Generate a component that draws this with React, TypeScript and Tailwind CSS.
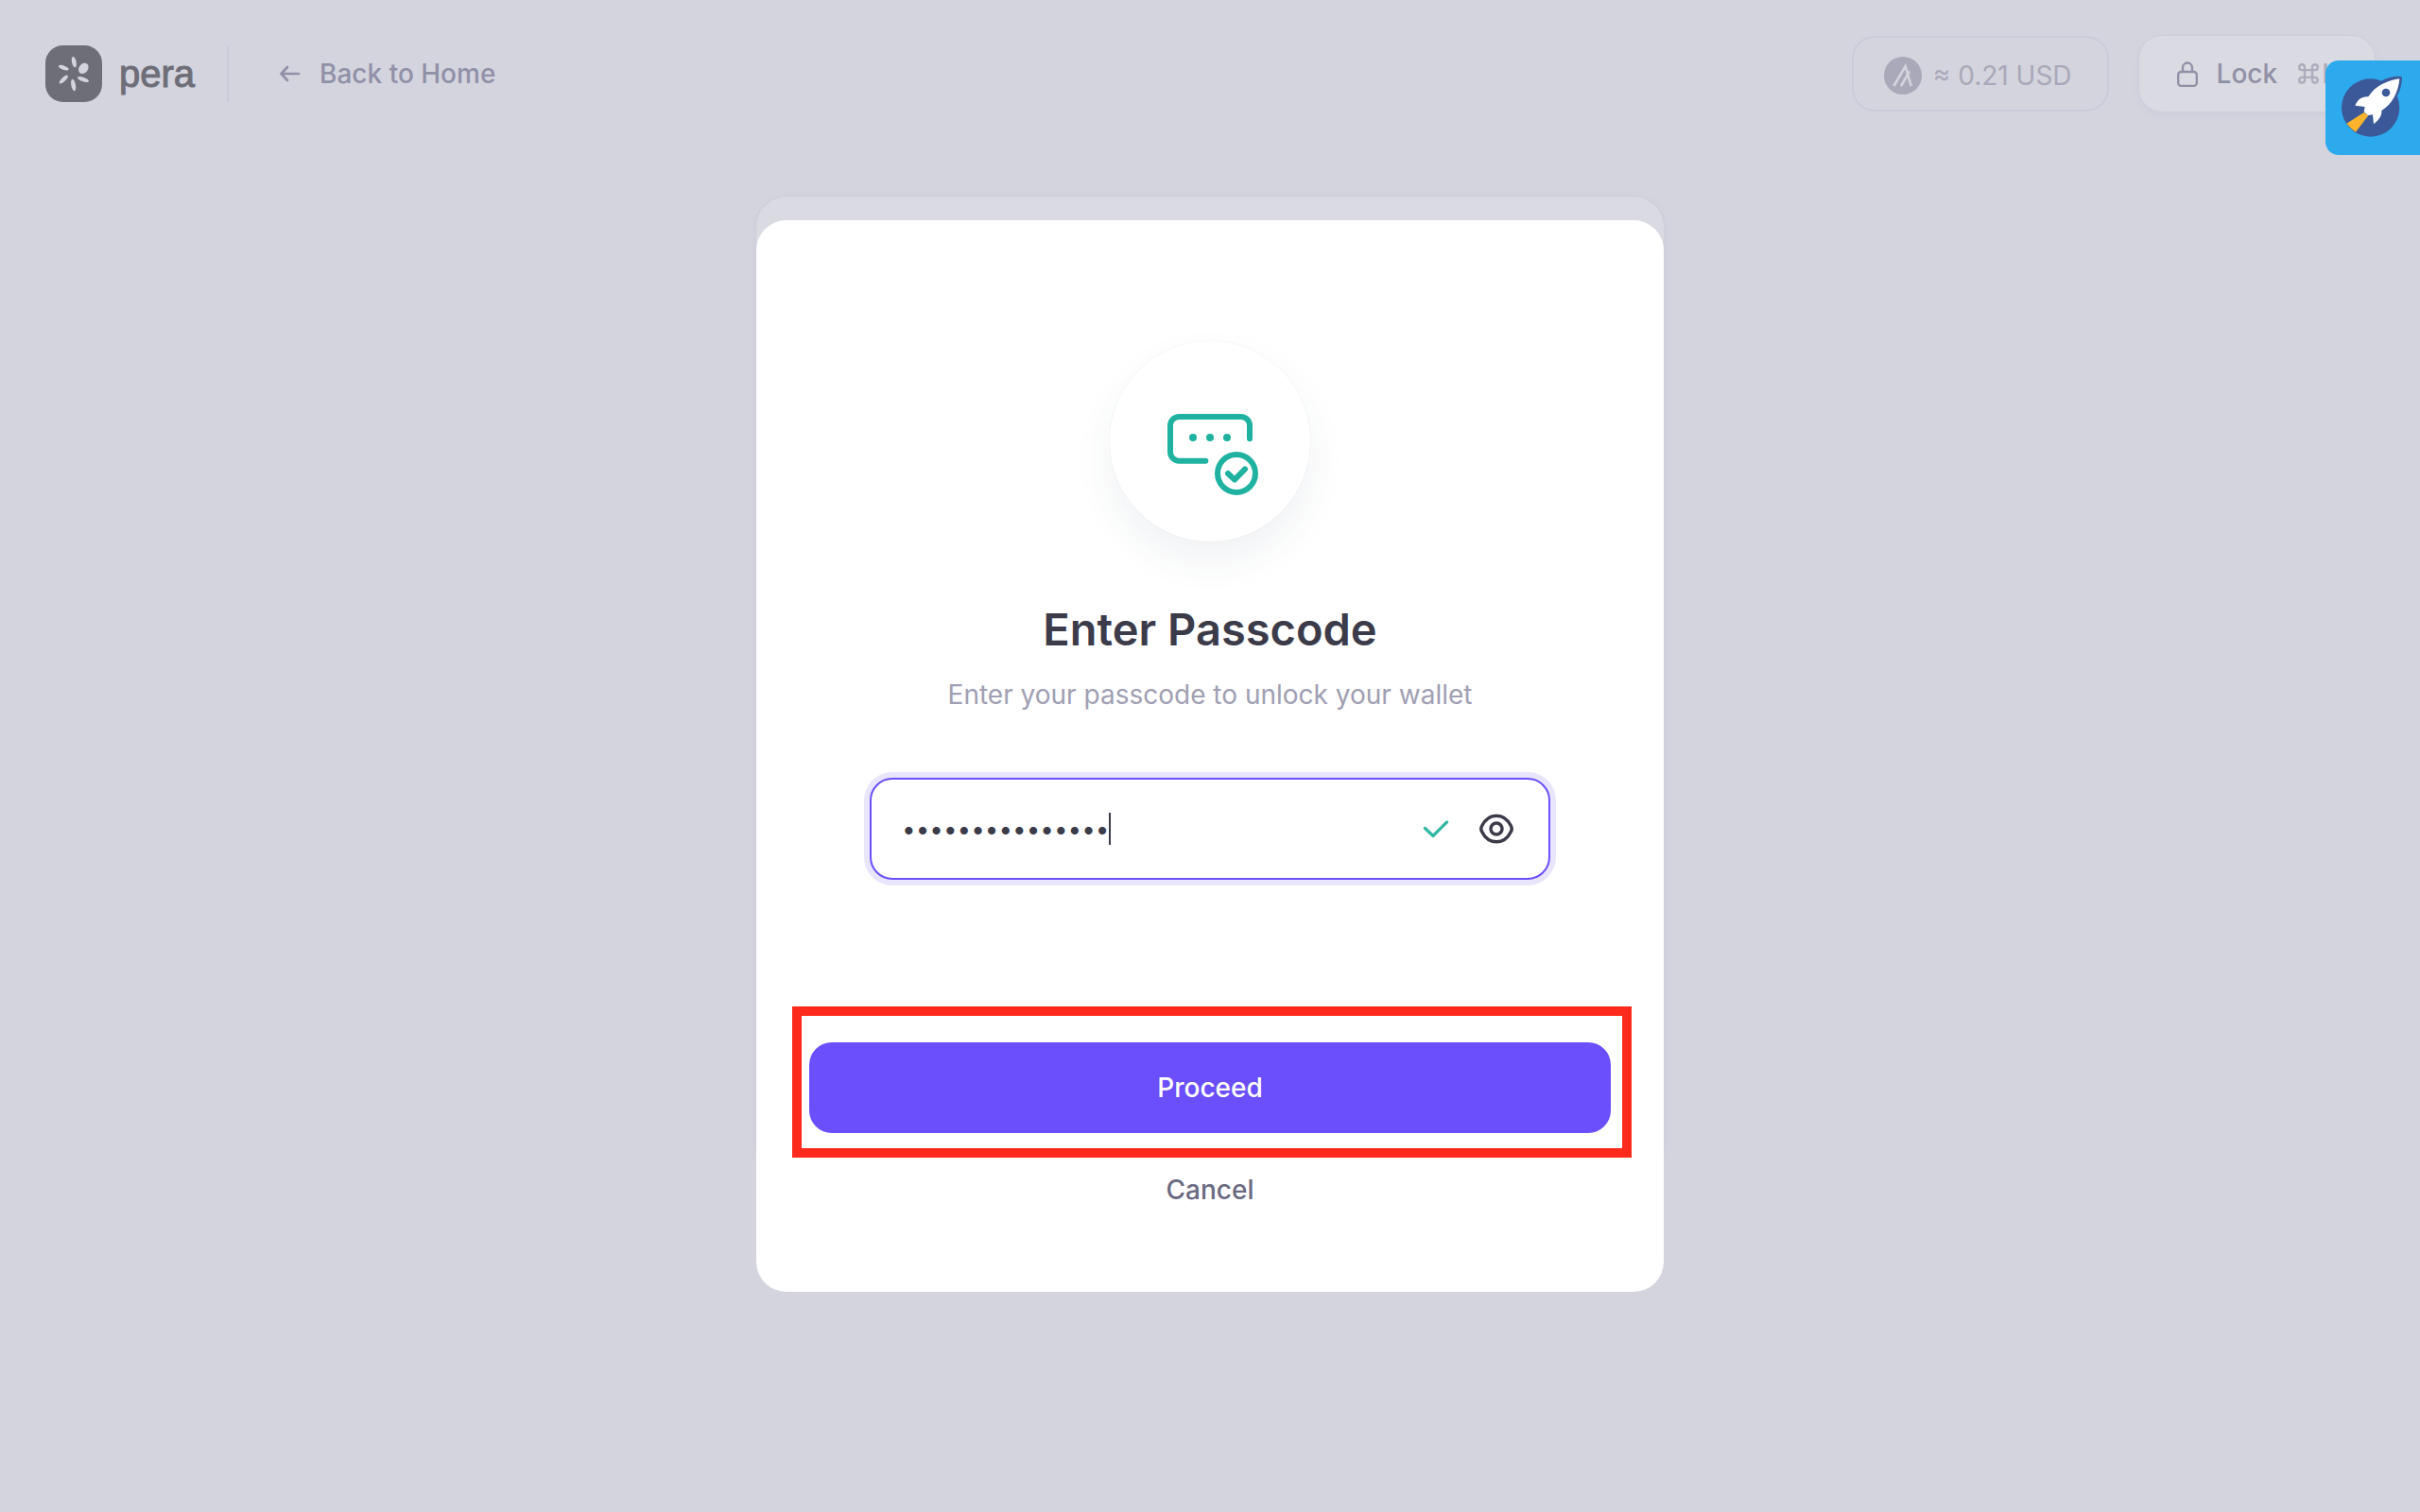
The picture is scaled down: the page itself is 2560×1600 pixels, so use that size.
import { useState } from "react";

function PeraMark() {
  return (
    <svg viewBox="0 0 180 180" className="size-[60px]" aria-hidden="true">
      <rect width="180" height="180" rx="56" fill="#6e6e78" />
      <g fill="#d4d4de">
        <ellipse cx="121" cy="73" rx="14" ry="18.500" transform="rotate(38 121 73)" />
        <ellipse cx="91" cy="53" rx="7" ry="17.500" transform="rotate(-12 91 53)" />
        <ellipse cx="58" cy="71" rx="6.500" ry="17" transform="rotate(-70 58 71)" />
        <ellipse cx="58" cy="108" rx="6.500" ry="18" transform="rotate(46 58 108)" />
        <ellipse cx="89" cy="126" rx="7" ry="19" transform="rotate(-11 89 126)" />
        <ellipse cx="120" cy="108" rx="6.500" ry="19" transform="rotate(-70 120 108)" />
      </g>
    </svg>
  );
}

function BackArrow() {
  return (
    <svg viewBox="0 0 22 18" className="h-[18px] w-[22px]" fill="none" stroke="currentColor" strokeWidth="2.600" strokeLinecap="round" strokeLinejoin="round" aria-hidden="true">
      <path d="M20 9H1.500M8 2L1.500 9L8 16" />
    </svg>
  );
}

function AlgoCoin() {
  return (
    <svg viewBox="0 0 120 120" className="size-10" aria-hidden="true">
      <circle cx="60" cy="60" r="60" fill="#a9a9b9" />
      <g fill="none" stroke="#d4d4de" strokeWidth="8" strokeLinejoin="miter">
        <path d="M31 93L68 30L86 93" />
        <path d="M54 93L81 46" />
      </g>
    </svg>
  );
}

function LockIcon() {
  return (
    <svg viewBox="0 0 22 27" className="h-[27px] w-[22px]" fill="none" stroke="currentColor" strokeWidth="2.300" aria-hidden="true">
      <rect x="1.200" y="11" width="19.600" height="14.800" rx="3" />
      <path d="M6 11V6.500a5 5 0 0 1 10 0V11" />
    </svg>
  );
}

function CommandIcon() {
  return (
    <svg viewBox="0 0 22 22" className="size-[22px]" fill="none" stroke="currentColor" strokeWidth="2.400" aria-hidden="true">
      <path d="M7 4.200a2.900 2.900 0 1 0-2.900 2.900h13.800a2.900 2.900 0 1 0-2.900-2.900v13.600a2.900 2.900 0 1 0 2.900-2.900H4.100a2.900 2.900 0 1 0 2.900 2.900z" />
    </svg>
  );
}

function Rocket() {
  return (
    <svg viewBox="0 0 300 300" className="size-[100px]" aria-hidden="true">
      <circle cx="143" cy="150" r="92" fill="#3b5998" />
      <path d="M176 66C198 53 222 49 240 51Q244 52 243 58C241 80 237 98 226 116L190 120Z" fill="#3b5998" />
      <path d="M122 165L136 175L96 227Q79 216 67 200Z" fill="#fbb42b" />
      <path d="M235 58C198 63 158 80 136 115C113 114 103 125 94 143L125 147L122 163L135 174L150 172L153 202C164 192 180 180 178 159C211 140 232 100 235 58Z" fill="#fff" />
      <circle cx="192" cy="102" r="13" fill="#3b5998" />
    </svg>
  );
}

function PasscodeIcon() {
  return (
    <svg viewBox="0 0 288 258" className="h-[86px] w-24" fill="none" stroke="#1fb2a0" strokeWidth="18" strokeLinecap="round" strokeLinejoin="round" aria-hidden="true">
      <path d="M261 79V37a28 28 0 0 0-28-28H37A28 28 0 0 0 9 37v84a28 28 0 0 0 28 28h84" />
      <g fill="#1fb2a0" stroke="none">
        <circle cx="81" cy="75" r="12" />
        <circle cx="135" cy="75" r="12" />
        <circle cx="189" cy="75" r="12" />
      </g>
      <circle cx="219" cy="189" r="60" />
      <path d="M192 189l21 20 33-34" />
    </svg>
  );
}

function CheckIcon() {
  return (
    <svg viewBox="0 0 28 20" className="h-5 w-7" fill="none" stroke="#34b8a5" strokeWidth="3.300" strokeLinecap="round" strokeLinejoin="round" aria-hidden="true">
      <path d="M2.500 9.500l8.500 8L25.500 3" />
    </svg>
  );
}

function EyeIcon() {
  return (
    <svg viewBox="0 0 36 32" className="h-8 w-9" fill="none" stroke="currentColor" strokeWidth="3.500" strokeLinejoin="round" aria-hidden="true">
      <path d="M2.600 19Q1 16 2.600 13C6 6 11.500 2.200 18 2.200S30 6 33.400 13Q35 16 33.400 19C30 26 24.500 29.800 18 29.800S6 26 2.600 19Z" />
      <circle cx="18" cy="16" r="6" />
    </svg>
  );
}

export default function App() {
  const [passcode, setPasscode] = useState("correcthorse123");
  const [visible, setVisible] = useState(false);

  return (
    <div className="relative min-h-screen bg-[#d4d4de] font-['Inter',sans-serif] text-[28px] leading-10">
      <header className="flex items-center justify-between px-12 pt-[38px]">
        <div className="flex items-center">
          <a href="#home" className="flex items-center gap-[18px]">
            <PeraMark />
            <span className="font-['Liberation_Sans',sans-serif] text-[40px] leading-[60px] text-[#6e6e78] [-webkit-text-stroke:1px_#6e6e78]">pera</span>
          </a>
          <span className="ml-[34px] h-[60px] w-0.5 bg-[#cacad9]" />
          <a href="#home" className="ml-[54px] flex items-center gap-5 font-medium text-[#9090a8]">
            <BackArrow />
            Back to Home
          </a>
        </div>
        <div className="flex items-center gap-8">
          <div className="flex h-20 items-center gap-3 rounded-3xl border-2 border-[#cacad9] pt-1 pr-[37px] pl-8 text-[#a9a9b9]">
            <AlgoCoin />
            ≈ 0.21 USD
          </div>
          <button type="button" className="flex h-20 items-center rounded-3xl bg-[#dadae2] px-10 font-medium text-[#9090a6] shadow-[0_0_0_1px_#cdcddb,0_4px_8px_#cdcdda]">
            <LockIcon />
            <span className="ml-5">Lock</span>
            <span className="ml-[22px] flex items-center gap-[3px] text-[#acacbc]">
              <CommandIcon />L
            </span>
          </button>
        </div>
      </header>

      <button type="button" aria-label="Launch" className="absolute top-16 right-0 overflow-hidden rounded-l-[14px] bg-[#2daaee]">
        <Rocket />
      </button>

      <main className="relative mx-auto mt-[90px] w-full max-w-[960px] pt-[25px]">
        <div className="absolute inset-x-0 top-0 bottom-32 rounded-[32px] bg-[#dadae2] shadow-[0_0_0_1px_#cdcddb,0_2px_6px_#cbcbda]" />
        <form onSubmit={(event) => event.preventDefault()} className="relative flex flex-col items-center rounded-[32px] bg-white px-14 pt-32 pb-[60px]">
          <div className="flex size-[212px] items-center justify-center rounded-full bg-white pt-7 pl-1.5 shadow-[0_0_2px_#00000010,0_20px_40px_#28466412]">
            <PasscodeIcon />
          </div>
          <h1 className="mt-16 text-[47px] leading-[58px] font-semibold text-[#3c3b4a]">Enter Passcode</h1>
          <label htmlFor="passcode" className="mt-5 text-[#a0a0b3]">
            Enter your passcode to unlock your wallet
          </label>
          <div className="relative mt-[68px] flex h-[108px] w-full max-w-[720px] items-center rounded-3xl border-2 border-[#6c4ffc] bg-white pr-[37px] pl-8 text-[#3c3b4a] ring-6 ring-[#e8e5fd]">
            <input
              id="passcode"
              type={visible ? "text" : "password"}
              value={passcode}
              onChange={(event) => setPasscode(event.target.value)}
              className="h-full min-w-0 flex-1 bg-transparent text-[26px] caret-transparent outline-none"
            />
            <span className="absolute left-[251px] h-[34px] w-0.5 bg-[#3c3b4a]" />
            <CheckIcon />
            <button type="button" aria-label="Show passcode" onClick={() => setVisible(!visible)} className="ml-8">
              <EyeIcon />
            </button>
          </div>
          <div className="relative mt-[172px] w-full">
            <button type="submit" className="h-24 w-full rounded-3xl bg-[#6c4ffc] font-medium text-white">
              Proceed
            </button>
            <div className="pointer-events-none absolute -top-[38px] -right-[22px] -bottom-[26px] -left-[18px] border-10 border-[#ff2a1b]" />
          </div>
          <button type="button" className="mt-3 h-24 w-full font-medium text-[#6a6a81]">
            Cancel
          </button>
        </form>
      </main>
    </div>
  );
}
